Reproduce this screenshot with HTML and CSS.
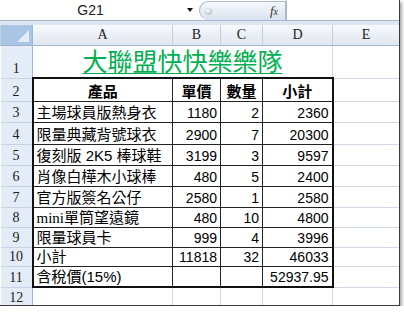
FILE: index.html
```html
<!DOCTYPE html>
<html lang="zh-Hant">
<head>
<meta charset="utf-8">
<title>大聯盟快快樂樂隊</title>
<link rel="stylesheet" href="styles.css">
</head>
<body>
<div class="frame">
  <div class="fbar">
    <div class="namebox"><span class="name">G21</span><span class="arrow"></span></div>
    <div class="pill"><span class="dot"></span><span class="fx">f<span class="fxx">x</span></span></div>
    <div class="input"></div>
  </div>
  <div class="band"></div>
  <table class="sheet">
    <colgroup><col class="c0"><col class="ca"><col class="cb"><col class="cc"><col class="cd"><col class="ce"></colgroup>
    <tr class="hdr"><th class="corner"></th><th>A</th><th>B</th><th>C</th><th>D</th><th>E</th></tr>
    <tr class="r1"><th>1</th><td colspan="4" class="title"><span>大聯盟快快樂樂隊</span></td><td></td></tr>
    <tr class="r2"><th>2</th><td class="d h t l">產品</td><td class="d h t">單價</td><td class="d h t">數量</td><td class="d h t r">小計</td><td></td></tr>
    <tr class="r3"><th>3</th><td class="d l">主場球員版熱身衣</td><td class="d n">1180</td><td class="d n">2</td><td class="d n r">2360</td><td></td></tr>
    <tr class="r4"><th>4</th><td class="d l">限量典藏背號球衣</td><td class="d n">2900</td><td class="d n">7</td><td class="d n r">20300</td><td></td></tr>
    <tr class="r5"><th>5</th><td class="d l">復刻版 2K5 棒球鞋</td><td class="d n">3199</td><td class="d n">3</td><td class="d n r">9597</td><td></td></tr>
    <tr class="r6"><th>6</th><td class="d l">肖像白樺木小球棒</td><td class="d n">480</td><td class="d n">5</td><td class="d n r">2400</td><td></td></tr>
    <tr class="r7"><th>7</th><td class="d l">官方版簽名公仔</td><td class="d n">2580</td><td class="d n">1</td><td class="d n r">2580</td><td></td></tr>
    <tr class="r8"><th>8</th><td class="d l"><span class="lat">mini</span>單筒望遠鏡</td><td class="d n">480</td><td class="d n">10</td><td class="d n r">4800</td><td></td></tr>
    <tr class="r9"><th>9</th><td class="d l">限量球員卡</td><td class="d n">999</td><td class="d n">4</td><td class="d n r">3996</td><td></td></tr>
    <tr class="r10"><th>10</th><td class="d l">小計</td><td class="d n">11818</td><td class="d n">32</td><td class="d n r">46033</td><td></td></tr>
    <tr class="r11"><th>11</th><td class="d l bt">含稅價(15%)</td><td class="d bt"></td><td class="d bt"></td><td class="d n r bt">52937.95</td><td></td></tr>
    <tr class="r12"><th>12</th><td></td><td></td><td></td><td></td><td></td></tr>
  </table>
</div>
</body>
</html>
```

FILE: styles.css
```css
body {
  margin: 0;
  background: #ffffff;
  font-family: "Liberation Sans", "Noto Sans CJK TC", sans-serif;
  color: #000;
}

.frame {
  width: 399px;
  height: 305px;
  border-right: 1px solid #3a3a3a;
  border-bottom: 1px solid #3a3a3a;
  box-shadow: 2px 2px 3px rgba(0, 0, 0, 0.35);
  overflow: hidden;
  background: #fff;
}

/* formula bar */
.fbar {
  display: flex;
  height: 20px;
  border-bottom: 1px solid #a4b7cf;
  background: #fff;
}

.namebox {
  width: 199px;
  display: flex;
  align-items: center;
}

.name {
  width: 181px;
  text-align: center;
  font-size: 14px;
  color: #222;
  line-height: 20px;
}

.arrow {
  width: 18px;
  display: flex;
  justify-content: center;
  align-items: center;
}

.arrow::before {
  content: "";
  border-left: 3px solid transparent;
  border-right: 3px solid transparent;
  border-top: 4px solid #111;
}

.pill {
  width: 87px;
  height: 19px;
  margin-top: 1px;
  box-sizing: border-box;
  border: 1px solid #a9b9ce;
  border-bottom: none;
  border-radius: 10px 0 0 10px;
  background: linear-gradient(#f5f8fc, #dbe3ee);
  display: flex;
  align-items: center;
  justify-content: space-between;
  padding: 0 7px 0 5px;
}

.dot {
  width: 7px;
  height: 7px;
  border-radius: 50%;
  background: radial-gradient(circle at 40% 35%, #ffffff, #a3abb5);
}

.fx {
  font-family: "Liberation Serif", serif;
  font-style: italic;
  font-size: 13px;
  color: #333;
}

.fxx {
  font-size: 10px;
}

.input {
  flex: 1;
  border-left: 1px solid #a9b9ce;
}

.band {
  height: 4px;
  background: #dde6f1;
}

/* sheet */
.sheet {
  border-collapse: collapse;
  table-layout: fixed;
  width: 399px;
}

.c0 { width: 32px; }
.ca { width: 140px; }
.cb { width: 48px; }
.cc { width: 42px; }
.cd { width: 70px; }
.ce { width: 67px; }

.hdr { height: 20px; }
.r1 { height: 33px; }
.r2 { height: 23px; }
.r3 { height: 21px; }
.r4 { height: 22px; }
.r5 { height: 21px; }
.r6 { height: 21px; }
.r7 { height: 21px; }
.r8 { height: 20px; }
.r9 { height: 20px; }
.r10 { height: 19px; }
.r11 { height: 21px; }
.r12 { height: 20px; }

th {
  font-family: "Liberation Serif", serif;
  font-weight: normal;
  font-size: 14px;
  color: #222;
  padding: 0;
  line-height: 16px;
}

.hdr th {
  background: linear-gradient(#f7f9fc, #dfe6ef);
  border: 1px solid #c2cfdf;
  border-top: none;
  border-bottom: 1px solid #9eb6ce;
  vertical-align: middle;
}

.hdr .corner {
  position: relative;
  background: #aac4e6;
  border-right: 1px solid #9eb6ce;
}

.corner::after {
  content: "";
  position: absolute;
  right: 3px;
  bottom: 3px;
  border-left: 12px solid transparent;
  border-bottom: 12px solid #e6ecf4;
}

tr:not(.hdr) th {
  background: #e4ecf7;
  border: 1px solid #c6d3e4;
  border-left: none;
  border-right: 1px solid #9eb6ce;
  vertical-align: bottom;
  padding-bottom: 1px;
}

td {
  border: 1px solid #d0d7e5;
  padding: 0 3px;
  vertical-align: bottom;
  font-size: 15px;
  line-height: 18px;
  white-space: nowrap;
  overflow: hidden;
}

.title {
  text-align: center;
  color: #00b050;
  font-size: 25px;
  line-height: 30px;
  text-decoration: underline;
  text-decoration-thickness: 1px;
  text-underline-offset: 2px;
}

.d { border: 1px solid #222; }
.t { border-top: 2px solid #111; }
.l { border-left: 2px solid #111; }
.r { border-right: 2px solid #111; }
.bt { border-bottom: 2px solid #111; }

.h {
  text-align: center;
  font-weight: bold;
}

.n {
  text-align: right;
  font-size: 14px;
}

.lat {
  font-family: "Liberation Serif", serif;
}
```
